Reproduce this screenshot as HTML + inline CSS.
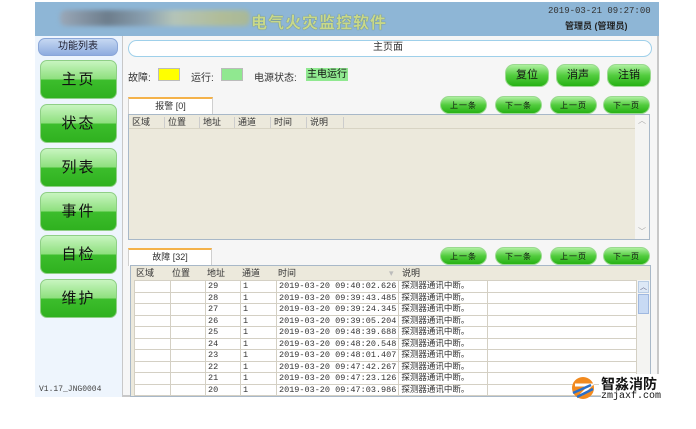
<!DOCTYPE html><html><head><meta charset="utf-8"><style>
*{margin:0;padding:0;box-sizing:border-box}
body{width:696px;height:429px;background:#fff;position:relative;overflow:hidden;font-family:"Liberation Sans","Noto Sans CJK SC",sans-serif;font-size:10px;color:#222}
.a{position:absolute}
.hdr{left:35px;top:2px;width:624px;height:34px;background:#8eb6d6}
.side{left:35px;top:36px;width:87px;height:361px;background:#eef5fd}
.main{left:122px;top:36px;width:537px;height:361px;background:#f6f6f6;border-right:2px solid #c8c8c8;border-bottom:2px solid #c8c8c8;border-left:1px solid #c8c8c8}
.gb{position:absolute;left:40px;width:77px;height:39px;border-radius:7px;background:linear-gradient(#c8f5c0 0%,#8fe07f 48%,#3cbd2c 52%,#2fb11f 100%);border:1px solid #8fcf86;font-size:15px;text-align:center;line-height:37px;color:#111;letter-spacing:2px}
.bb{position:absolute;border-radius:9px;background:linear-gradient(#aef0a0 0%,#52cc3e 50%,#27b114 100%);border:1px solid #9ad98f;text-align:center;color:#111}
.sb{height:18px;width:47px;font-size:8px;line-height:17px;letter-spacing:1px}
.tab{position:absolute;background:#fff;border:1px solid #cfcfcf;border-top:2px solid #f4b24a;border-bottom:none;text-align:center;font-size:9px;line-height:14px;color:#333}
table{border-collapse:collapse;font-size:9px;color:#333}
</style></head><body>
<div class="a hdr"></div>
<div class="a" style="left:60px;top:10px;width:190px;height:16px;background:linear-gradient(90deg,#9aa8b8,#6d7d8c 25%,#8aa0b0 45%,#b4c4b8 60%,#b0bc98 85%,#a8b898);border-radius:6px;filter:blur(2px)"></div>
<div class="a" style="left:251px;top:9px;font-size:16px;color:#c8d88a;font-weight:bold;letter-spacing:1px;text-shadow:0 0 1px #4a6a4a">电气火灾监控软件</div>
<div class="a" style="left:548px;top:6px;font-family:'Liberation Mono',monospace;font-size:9px;color:#333">2019-03-21 09:27:00</div>
<div class="a" style="left:565px;top:19px;font-size:9px;font-weight:bold;color:#222">管理员 (管理员)</div>
<div class="a side"></div>
<div class="a main"></div>
<div class="a" style="left:38px;top:38px;width:80px;height:18px;border-radius:7px;background:linear-gradient(#c6d8f2,#8eacdf);border:1px solid #8aa6d8;text-align:center;font-size:10px;line-height:16px;color:#223">功能列表</div>
<div class="gb" style="top:60px">主页</div>
<div class="gb" style="top:104px">状态</div>
<div class="gb" style="top:148px">列表</div>
<div class="gb" style="top:192px">事件</div>
<div class="gb" style="top:235px">自检</div>
<div class="gb" style="top:279px">维护</div>
<div class="a" style="left:39px;top:385px;font-size:8px;color:#444;font-family:'Liberation Mono',monospace">V1.17_JNG0004</div>
<div class="a" style="left:128px;top:40px;width:524px;height:17px;border:1.5px solid #9fd0ea;border-radius:9px;background:#fff;font-size:10px;line-height:14px;padding-left:244px;color:#333">主页面</div>
<div class="a" style="left:128px;top:69px;font-size:10px;color:#333">故障:</div>
<div class="a" style="left:158px;top:68px;width:22px;height:13px;background:#ffff00;border:1px solid #bbb"></div>
<div class="a" style="left:191px;top:69px;font-size:10px;color:#333">运行:</div>
<div class="a" style="left:221px;top:68px;width:22px;height:13px;background:#90e890;border:1px solid #bbb"></div>
<div class="a" style="left:254px;top:69px;font-size:10px;color:#333">电源状态:</div>
<div class="a" style="left:306px;top:68px;height:13px;background:#90e890;font-size:10px;line-height:13px;padding:0 1px;color:#111">主电运行</div>
<div class="bb" style="left:505px;top:64px;width:44px;height:23px;font-size:11px;line-height:21px">复位</div>
<div class="bb" style="left:556px;top:64px;width:44px;height:23px;font-size:11px;line-height:21px">消声</div>
<div class="bb" style="left:607px;top:64px;width:44px;height:23px;font-size:11px;line-height:21px">注销</div>
<div class="tab" style="left:128px;top:97px;width:85px;height:18px">报警 [0]</div>
<div class="bb sb" style="left:440px;top:96px">上一条</div>
<div class="bb sb" style="left:495px;top:96px">下一条</div>
<div class="bb sb" style="left:550px;top:96px">上一页</div>
<div class="bb sb" style="left:603px;top:96px">下一页</div>
<div class="a" style="left:128px;top:114px;width:522px;height:126px;background:#ece9dc;border:1px solid #a8b8c8">
 <div style="height:14px;border-bottom:1px solid #d8d4c4;font-size:9px;line-height:14px;color:#333;position:relative">
 <span class="a" style="left:3px">区域</span><span class="a" style="left:39px">位置</span><span class="a" style="left:74px">地址</span><span class="a" style="left:109px">通道</span><span class="a" style="left:145px">时间</span><span class="a" style="left:181px">说明</span>
 <span class="a" style="left:35px;top:2px;height:11px;border-left:1px solid #ccc"></span><span class="a" style="left:70px;top:2px;height:11px;border-left:1px solid #ccc"></span><span class="a" style="left:105px;top:2px;height:11px;border-left:1px solid #ccc"></span><span class="a" style="left:141px;top:2px;height:11px;border-left:1px solid #ccc"></span><span class="a" style="left:177px;top:2px;height:11px;border-left:1px solid #ccc"></span><span class="a" style="left:214px;top:2px;height:11px;border-left:1px solid #ccc"></span></div>
 <div class="a" style="right:0;top:0;width:14px;height:124px;background:#f4f4f2;color:#aaa;font-size:8px;text-align:center">︿<div style="position:absolute;bottom:2px;width:14px">﹀</div></div>
</div>
<div class="tab" style="left:128px;top:248px;width:84px;height:18px">故障 [32]</div>
<div class="bb sb" style="left:440px;top:247px">上一条</div>
<div class="bb sb" style="left:495px;top:247px">下一条</div>
<div class="bb sb" style="left:550px;top:247px">上一页</div>
<div class="bb sb" style="left:603px;top:247px">下一页</div>
<div class="a" style="left:130px;top:265px;width:521px;height:132px;background:#ece9dc;border:1px solid #a8b8c8;overflow:hidden">
 <div style="height:14px;font-size:9px;line-height:14px;position:relative;color:#333">
 <span class="a" style="left:5px">区域</span><span class="a" style="left:41px">位置</span><span class="a" style="left:76px">地址</span><span class="a" style="left:111px">通道</span><span class="a" style="left:147px">时间</span><span class="a" style="left:258px;color:#bbb">▾</span><span class="a" style="left:271px">说明</span></div>
 <table class="a" style="left:3px;top:14px;width:503px;background:#fff">
 <colgroup><col style="width:36px"><col style="width:35px"><col style="width:35px"><col style="width:36px"><col style="width:122px"><col style="width:89px"><col></colgroup>
 <tbody style="font-family:'Liberation Mono','Noto Sans CJK SC',monospace;font-size:8.5px">
 <tr><td></td><td></td><td>29</td><td>1</td><td>2019-03-20 09:40:02.626</td><td>探测器通讯中断。</td><td></td></tr>
 <tr><td></td><td></td><td>28</td><td>1</td><td>2019-03-20 09:39:43.485</td><td>探测器通讯中断。</td><td></td></tr>
 <tr><td></td><td></td><td>27</td><td>1</td><td>2019-03-20 09:39:24.345</td><td>探测器通讯中断。</td><td></td></tr>
 <tr><td></td><td></td><td>26</td><td>1</td><td>2019-03-20 09:39:05.204</td><td>探测器通讯中断。</td><td></td></tr>
 <tr><td></td><td></td><td>25</td><td>1</td><td>2019-03-20 09:48:39.688</td><td>探测器通讯中断。</td><td></td></tr>
 <tr><td></td><td></td><td>24</td><td>1</td><td>2019-03-20 09:48:20.548</td><td>探测器通讯中断。</td><td></td></tr>
 <tr><td></td><td></td><td>23</td><td>1</td><td>2019-03-20 09:48:01.407</td><td>探测器通讯中断。</td><td></td></tr>
 <tr><td></td><td></td><td>22</td><td>1</td><td>2019-03-20 09:47:42.267</td><td>探测器通讯中断。</td><td></td></tr>
 <tr><td></td><td></td><td>21</td><td>1</td><td>2019-03-20 09:47:23.126</td><td>探测器通讯中断。</td><td></td></tr>
 <tr><td></td><td></td><td>20</td><td>1</td><td>2019-03-20 09:47:03.986</td><td>探测器通讯中断。</td><td></td></tr>
 </tbody></table>
 <div class="a" style="left:506px;top:14px;width:13px;height:120px;background:#f4f4f2"><div style="margin:1px;height:12px;background:#dde8f6;border:1px solid #b8cce4;font-size:7px;text-align:center;color:#557">︿</div><div style="margin:1px;height:20px;background:#c8daf4;border:1px solid #9fb8e0"></div></div>
</div>
<style>tbody td{border:1px solid #d4d0c4;height:11.5px;line-height:10px;padding:0 2px;white-space:nowrap;overflow:hidden}</style>
<div class="a" style="left:571px;top:376px;width:28px;height:24px">
<svg width="28" height="24" viewBox="0 0 28 24"><circle cx="12" cy="12" r="11" fill="#f28a1e"/><path d="M4 9h16l-10 10" stroke="#fff" stroke-width="3" fill="none"/><path d="M2 17l18-8M6 21l16-8" stroke="#2a6fc8" stroke-width="2.5"/></svg></div>
<div class="a" style="left:599px;top:374px;font-size:14px;font-weight:bold;color:#111;background:#fff;padding:0 2px">智淼消防</div>
<div class="a" style="left:601px;top:391px;font-size:10px;font-family:'Liberation Mono',monospace;color:#111;background:#fff">zmjaxf.com</div>
</body></html>
